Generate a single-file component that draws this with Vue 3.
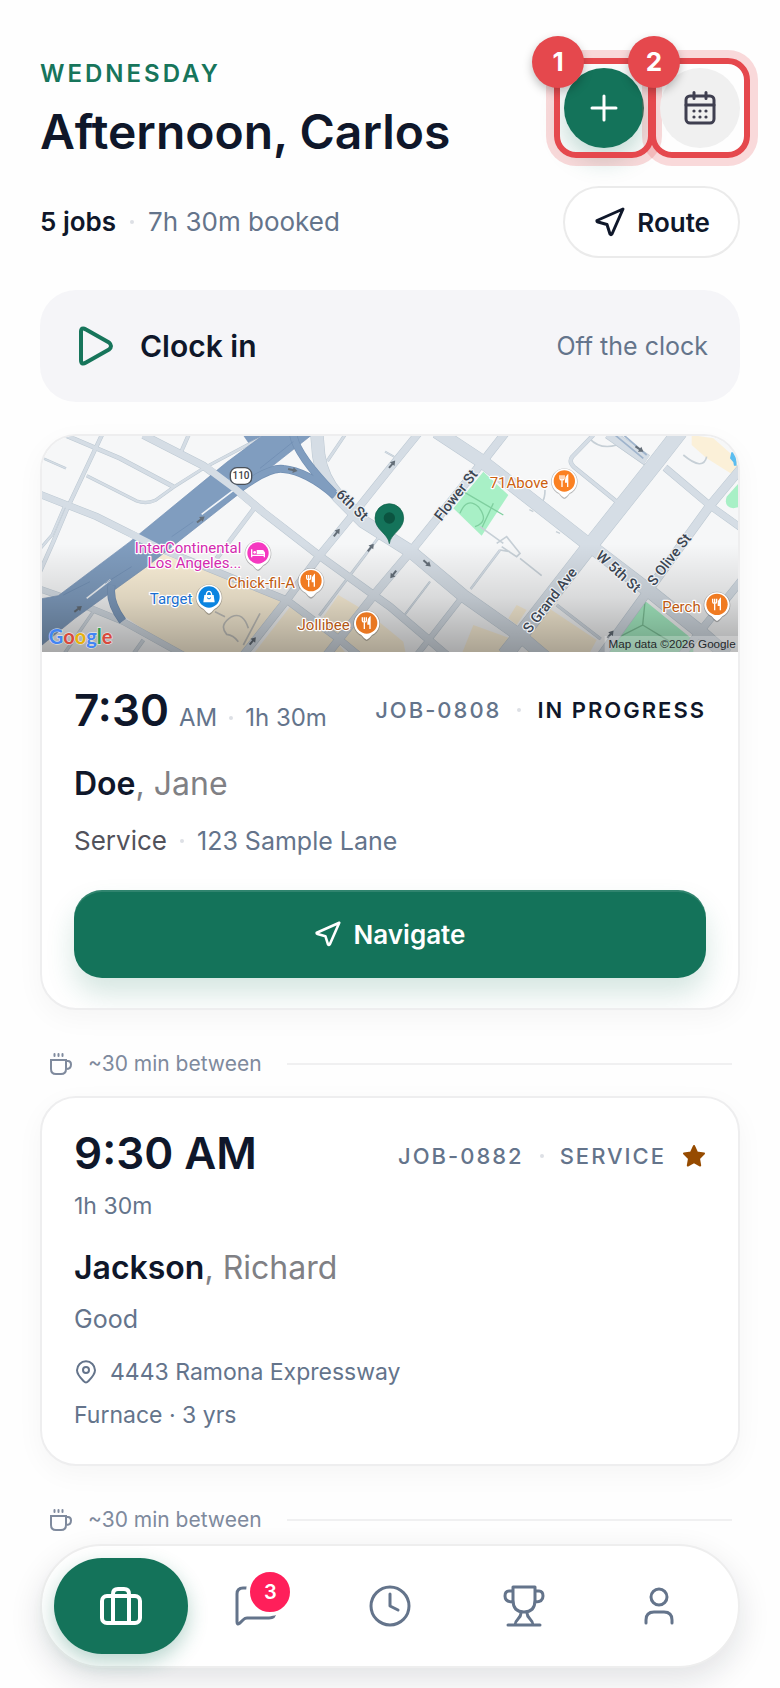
<script setup>
const roads = [
  { d: 'M340 30 L520 122 L620 195 L700 262 L865 390 L1080 545 L1250 690', w: 24 },
  { d: 'M860 20 L866 90 Q876 160 925 215 L1000 290 L1140 378 L1300 512 L1470 632 L1550 700', w: 40 },
  { d: 'M1220 20 L1360 112 L1680 362 L1860 500 L2010 620 L2090 690', w: 42 },
  { d: 'M30 208 L200 275 L400 375 L560 440 L770 525 L930 645 L985 690', w: 22 },
  { d: 'M30 492 L110 520 L280 590 L460 690', w: 20 },
  { d: 'M1425 25 L1360 108 L1150 370 L1040 500 L890 690', w: 26 },
  { d: 'M1165 25 L1080 130 L960 280 L870 390 L770 525 L640 690', w: 24 },
  { d: 'M1950 20 L1880 110 L1680 362 L1480 620 L1425 690', w: 48 },
  { d: 'M2135 128 L2040 242 L1860 490 L1715 690', w: 28 },
  { d: 'M1905 128 L2040 242 L2135 310', w: 22 },
  { d: 'M2135 465 L2010 620 L1955 690', w: 24 },
  { d: 'M1690 30 L1626 96 Q1616 112 1632 126 L1765 234', w: 13 },
  { d: 'M1735 25 L1850 105', w: 34 },
  { d: 'M680 240 L560 400', w: 14 },
  { d: 'M1580 540 L1712 642', w: 10 },
  { d: 'M1300 512 L1200 640 L1160 690', w: 18 },
  { d: 'M1410 375 L1322 492', w: 7 },
  { d: 'M1200 470 L1120 575', w: 6 },
  { d: 'M105 30 L270 100 L430 185', w: 14 },
  { d: 'M218 25 L112 250 L70 350 L30 440', w: 13 },
  { d: 'M105 240 L66 330 L30 372', w: 9 },
  { d: 'M690 40 L520 130 L430 187 L376 226 Q350 238 320 228 L170 152', w: 10 },
  { d: 'M478 25 L452 84', w: 12 },
  { d: 'M40 100 L108 130', w: 7 },
  { d: 'M948 25 L892 108', w: 10 },
  { d: 'M1065 80 L1110 105', w: 6 },
  { d: 'M1055 325 L868 572', w: 8 },
  { d: 'M190 560 L100 690', w: 10 },
  { d: 'M340 645 L308 690', w: 12 },
]

const streets = [
  { name: '6th St', x: 966, y: 240, r: 44 },
  { name: 'Flower St', x: 1278, y: 211, r: -52 },
  { name: 'S Grand Ave', x: 1560, y: 526, r: -52 },
  { name: 'W 5th St', x: 1765, y: 440, r: 42 },
  { name: 'S Olive St', x: 1918, y: 404, r: -52 },
]

const places = [
  { lines: ['InterContinental', 'Los Angeles...'], tx: 634, ty: 384, x: 684, y: 384, c: '#f538c0', t: '#d32bb0', k: 'bed' },
  { lines: ['Chick-fil-A'], tx: 795, ty: 488, x: 843, y: 467, c: '#f07b22', t: '#bd5a12', k: 'food' },
  { lines: ['Target'], tx: 487, ty: 538, x: 537, y: 516, c: '#0b84e0', t: '#1a6fd0', k: 'bag' },
  { lines: ['Jollibee'], tx: 959, ty: 615, x: 1010, y: 594, c: '#e87722', t: '#b05615', k: 'food' },
  { lines: ['71Above'], tx: 1555, ty: 189, x: 1603, y: 168, c: '#fb8122', t: '#cc5f10', k: 'food' },
  { lines: ['Perch'], tx: 2012, ty: 560, x: 2061, y: 538, c: '#f07b22', t: '#bd5a12', k: 'food' },
]

const arrows = [
  { x: 512, y: 284, r: -38 },
  { x: 144, y: 552, r: -38 },
  { x: 788, y: 135, r: 12 },
  { x: 1086, y: 118, r: -50 },
  { x: 920, y: 323, r: -52 },
  { x: 1022, y: 368, r: -52 },
  { x: 1090, y: 448, r: 128 },
  { x: 668, y: 648, r: -50 },
  { x: 1191, y: 415, r: 40 },
  { x: 1828, y: 72, r: 35 },
  { x: 1741, y: 628, r: -50 },
]
</script>

<template>
  <main class="page">
    <header class="top">
      <div class="greeting">
        <p class="day">WEDNESDAY</p>
        <h1>Afternoon, Carlos</h1>
      </div>
      <div class="actions">
        <div class="spot">
          <button class="round add" aria-label="Add job">
            <svg width="28" height="28" viewBox="0 0 28 28" fill="none" stroke="currentColor" stroke-width="3" stroke-linecap="round"><path d="M14 2v24M2 14h24" /></svg>
          </button>
          <span class="ring"></span><span class="num">1</span>
        </div>
        <div class="spot">
          <button class="round cal" aria-label="Calendar">
            <svg width="32" height="34" viewBox="0 0 32 34" fill="none" stroke="currentColor" stroke-width="3" stroke-linecap="round">
              <rect x="2" y="5" width="28" height="27" rx="4" /><path d="M2 14h28M10 1.5v6M22 1.5v6" />
              <g fill="currentColor" stroke="none"><circle cx="10" cy="20" r="1.6" /><circle cx="16" cy="20" r="1.6" /><circle cx="22" cy="20" r="1.6" /><circle cx="10" cy="26" r="1.6" /><circle cx="16" cy="26" r="1.6" /><circle cx="22" cy="26" r="1.6" /></g>
            </svg>
          </button>
          <span class="ring"></span><span class="num">2</span>
        </div>
      </div>
    </header>

    <section class="summary">
      <p class="booked"><strong>5 jobs</strong><i class="dot"></i><span>7h 30m booked</span></p>
      <button class="route">
        <svg width="30" height="30" viewBox="0 0 30 30" fill="none" stroke="currentColor" stroke-width="3" stroke-linejoin="round"><path d="M28 2 L2 13.500 Q1.500 14.500 3 15 L12 17.500 L15 27 Q16 28.500 17 27 Z" /></svg>
        Route
      </button>
    </section>

    <button class="clock">
      <svg width="36" height="40" viewBox="0 0 36 40" fill="none" stroke="currentColor" stroke-width="4" stroke-linejoin="round"><path d="M3 6 V34 Q3 39.500 8 36.500 L31 23.500 Q35 20 31 16.500 L8 3.500 Q3 .5 3 6 Z" /></svg>
      <strong>Clock in</strong>
      <span>Off the clock</span>
    </button>

    <article class="card">
      <svg class="map" viewBox="36 33 2088 648" preserveAspectRatio="xMidYMid slice" role="img" aria-label="Map">
        <defs>
          <linearGradient id="shade" x1="0" y1="0" x2="0" y2="1">
            <stop offset="0.5" stop-color="#000" stop-opacity="0" />
            <stop offset="0.75" stop-color="#000" stop-opacity="0.12" />
            <stop offset="1" stop-color="#000" stop-opacity="0.32" />
          </linearGradient>
        </defs>
        <rect x="0" y="0" width="2160" height="720" fill="#f6f7f8" />
        <g fill="#fbf0d8">
          <path d="M390 385 L250 480 L262 560 L380 640 L460 700 L620 700 L765 535 L560 446 Z" />
          <path d="M780 545 L660 700 L960 700 L920 650 Z" /><path d="M925 510 L1010 560 L1120 650 L1130 700 L1000 700 L870 590 Z" />
          <path d="M1460 540 L1490 555 L1460 600 L1435 580 Z" /><path d="M1550 545 L1700 645 L1670 700 L1490 700 L1500 610 Z" />
          <path d="M1330 600 L1440 640 L1400 700 L1290 700 Z" /><path d="M1985 30 L2050 40 L2130 110 L2110 150 L2030 100 L1985 60 Z" />
        </g>
        <g fill="#a8f0c6">
          <path d="M1360 140 L1435 210 L1355 332 L1270 250 Z" /><path d="M1842 525 L1990 645 L1990 700 L1715 700 Z" />
          <path d="M2130 170 L2090 215 Q2080 245 2110 250 L2130 245 Z" />
        </g>
        <path d="M2104 82 L2100 100 L2110 112 L2112 122 L2120 122 L2118 82 Z" fill="#5bbdf0" />
        <path d="M1300 200 L1420 270 M1290 265 Q1310 215 1345 245 Q1380 290 1335 305 M1390 235 L1355 310" fill="none" stroke="#7fcf9f" stroke-width="4" />
        <path d="M1845 530 L1838 600 L1740 650 M1838 600 L1920 650" fill="none" stroke="#7fc49a" stroke-width="4" />
        <g fill="none" stroke="#c6cfd6" stroke-width="5">
          <path d="M1350 305 L1420 355 M1400 355 L1430 335 L1470 385 L1460 395 L1415 365 M1410 375 L1440 380 M1470 400 L1535 452 M1545 195 Q1545 220 1536 232 M1678 40 Q1710 75 1760 60 L1860 130 M1960 90 Q2020 140 2030 95" />
          <path d="M555 560 L585 575 M690 565 L640 660 M655 610 Q640 560 605 575 Q565 600 590 628 Q610 630 625 650" stroke="#c3c2bd" />
        </g>
        <path d="M1510 260 l-12 -6 M1590 325 l-12 -5" stroke="#c6cfd6" stroke-width="4" />
        <path v-for="(r, i) in roads" :key="'c' + i" :d="r.d" :stroke-width="r.w" fill="none" stroke="#bcc8d2" />
        <path v-for="(r, i) in roads" :key="'f' + i" :d="r.d" :stroke-width="r.w - 3" fill="none" stroke="#d5dde5" />
        <g stroke="#7290b3" stroke-width="2" fill="#809dbf">
          <path d="M700 30 L590 112 L300 350 L85 512 L30 522 L30 665 L135 580 L350 425 L620 212 L640 192 L845 30 Z" />
          <path d="M640 30 L700 30 L655 52 Z" />
        </g>
        <g fill="none" stroke-linecap="butt">
          <path d="M630 190 Q720 125 760 132 Q830 138 915 212 M790 30 Q800 90 912 205 M245 480 Q235 530 278 588" stroke="#7290b3" stroke-width="24" />
          <path d="M630 190 Q720 125 760 132 Q830 138 915 212 M790 30 Q800 90 912 205 M245 480 Q235 530 278 588" stroke="#809dbf" stroke-width="20" />
          <path d="M515 268 L610 196 M170 520 L242 464" stroke="#f2f5f8" stroke-width="5" />
          <path d="M425 335 L490 290 M225 475 L305 425 M690 130 L790 50 M100 510 L180 470" stroke="#6c8bb0" stroke-width="2" />
          <path d="M530 128 L620 195 L700 262 M300 325 L400 376" stroke="#d5dde5" stroke-width="21" />
        </g>
        <path d="M1755 30 L1840 100 M1775 25 L1850 90" stroke="#9fb4cc" stroke-width="5" />
        <g v-for="(a, i) in arrows" :key="'a' + i" :transform="`translate(${a.x} ${a.y}) rotate(${a.r})`">
          <path d="M-14 0 H4" stroke="#646e78" stroke-width="6" /><path d="M1 -9 L15 0 L1 9 Z" fill="#646e78" />
        </g>
        <rect x="36" y="33" width="2088" height="648" fill="url(#shade)" />
        <rect x="601" y="128" width="64" height="50" rx="20" fill="#fff" stroke="#4a5058" stroke-width="4" />
        <text x="633" y="163" class="shield">110</text>
        <text v-for="s in streets" :key="s.name" class="street" dy="14" :transform="`translate(${s.x} ${s.y}) rotate(${s.r})`">{{ s.name }}</text>
        <g v-for="p in places" :key="p.tx">
          <text v-for="(l, i) in p.lines" :key="l" class="place" :x="p.tx" :y="p.ty + i * 46" :fill="p.t">{{ l }}</text>
          <g :transform="`translate(${p.x} ${p.y})`">
            <path d="M0 54 Q-7 52 -16 39 A40 40 0 1 1 16 39 Q7 52 0 54 Z" fill="#000" opacity=".25" />
            <path d="M0 50 Q-7 48 -16 36 A38 38 0 1 1 16 36 Q7 48 0 50 Z" fill="#fff" />
            <circle r="32" :fill="p.c" />
            <g v-if="p.k === 'food'" fill="none" stroke="#fff">
              <path d="M-13 -17 V-7 Q-13 -3 -7 -3 Q-1 -3 -1 -7 V-17 M-7 -17 V18" stroke-width="4" />
              <path d="M10 18 V-17 Q4 -12 4 -2 V3 H10 Z" fill="#fff" stroke-width="4" />
            </g>
            <g v-else-if="p.k === 'bed'" fill="none" stroke="#fff" stroke-width="4">
              <path d="M-19 -11 V13 M-19 7 H19 M19 13 V-2" /><circle cx="-10" cy="-2" r="4" fill="#fff" stroke="none" /><path d="M-2 2 V-7 H13 Q18 -7 18 2 Z" fill="#fff" />
            </g>
            <g v-else>
              <path d="M-14 -6 H14 L17 16 H-17 Z" fill="#fff" /><path d="M-8 -4 Q-8 -17 0 -17 Q8 -17 8 -4" fill="none" stroke="#fff" stroke-width="4" /><path d="M-6 2 Q0 10 6 2" fill="none" stroke="#0b84e0" stroke-width="3" />
            </g>
          </g>
        </g>
        <path d="M1078 356 C1074 325 1035 315 1035 279 A43 43 0 0 1 1121 279 C1121 315 1082 325 1078 356 Z" fill="#14735a" stroke="#0d6049" stroke-width="2" />
        <circle cx="1078" cy="279" r="17" fill="#0b5340" />
        <text x="56" y="658" class="brand"><tspan fill="#4285f4">G</tspan><tspan fill="#d9493c">o</tspan><tspan fill="#e8b10c">o</tspan><tspan fill="#4285f4">g</tspan><tspan fill="#2f9e50">l</tspan><tspan fill="#d9493c">e</tspan></text>
        <rect x="1724" y="633" width="400" height="48" fill="#fff" opacity=".25" />
        <text x="2117" y="669" class="credit">Map data ©2026 Google</text>
      </svg>
      <div class="body">
        <div class="line">
          <p class="time"><b>7:30</b><span>AM</span><i class="dot"></i><span>1h 30m</span></p>
          <p class="tag"><span>JOB-0808</span><i class="dot"></i><span class="dark">IN PROGRESS</span></p>
        </div>
        <h2>Doe<span>, Jane</span></h2>
        <p class="where"><b>Service</b><i class="dot"></i><span>123 Sample Lane</span></p>
        <button class="navigate">
          <svg width="26" height="26" viewBox="0 0 30 30" fill="none" stroke="currentColor" stroke-width="3" stroke-linejoin="round"><path d="M28 2 L2 13.500 Q1.500 14.500 3 15 L12 17.500 L15 27 Q16 28.500 17 27 Z" /></svg>
          Navigate
        </button>
      </div>
    </article>

    <div class="between">
      <svg width="22" height="22" viewBox="0 0 22 22" fill="none" stroke="currentColor" stroke-width="2" stroke-linecap="round"><path d="M1 7 H16 V16 Q16 21 11 21 H6 Q1 21 1 16 Z M16 8 H18 Q21 8 21 11.500 Q21 16 16 16 M4.500 1 V3 M8.500 1 V3 M12.500 1 V3" /></svg>
      <span>~30 min between</span>
      <hr />
    </div>

    <article class="card">
      <div class="body second">
        <div class="line">
          <p class="time"><b>9:30 AM</b></p>
          <p class="tag">
            <span>JOB-0882</span><i class="dot"></i><span>SERVICE</span>
            <svg class="star" width="24" height="24" viewBox="0 0 24 24" fill="#964b00" stroke="#964b00" stroke-width="2" stroke-linejoin="round"><path d="M12 2 L15 8.500 L22 9.500 L17 14.500 L18.200 21.500 L12 18.200 L5.800 21.500 L7 14.500 L2 9.500 L9 8.500 Z" /></svg>
          </p>
        </div>
        <p class="duration">1h 30m</p>
        <h2>Jackson<span>, Richard</span></h2>
        <p class="note">Good</p>
        <p class="address">
          <svg width="24" height="24" viewBox="0 0 24 24" fill="none" stroke="currentColor" stroke-width="2"><path d="M12 22.500 Q11 22.500 9.500 21 Q3 14.500 3 10.300 A9 9 0 0 1 21 10.300 Q21 14.500 14.500 21 Q13 22.500 12 22.500 Z" /><circle cx="12" cy="10" r="3" /></svg>
          <span>4443 Ramona Expressway</span>
        </p>
        <p class="asset">Furnace · 3 yrs</p>
      </div>
    </article>

    <div class="between last">
      <svg width="22" height="22" viewBox="0 0 22 22" fill="none" stroke="currentColor" stroke-width="2" stroke-linecap="round"><path d="M1 7 H16 V16 Q16 21 11 21 H6 Q1 21 1 16 Z M16 8 H18 Q21 8 21 11.500 Q21 16 16 16 M4.500 1 V3 M8.500 1 V3 M12.500 1 V3" /></svg>
      <span>~30 min between</span>
      <hr />
    </div>

    <nav class="tabs">
      <button class="tab active" aria-label="Jobs">
        <svg width="42" height="38" viewBox="0 0 42 38" fill="none" stroke="currentColor" stroke-width="4" stroke-linejoin="round"><rect x="2" y="9" width="38" height="27" rx="5" /><path d="M13 35 V7 Q13 2 18 2 H24 Q29 2 29 7 V35" /></svg>
      </button>
      <button class="tab" aria-label="Messages">
        <svg width="42" height="40" viewBox="0 0 42 40" fill="none" stroke="currentColor" stroke-width="3" stroke-linecap="round" stroke-linejoin="round"><path d="M8 2 H34 Q40 2 40 8 V26 Q40 32 34 32 H12 Q10 32 8.500 33.500 L4.500 37.300 Q2 39 2 36 V8 Q2 2 8 2 Z" /></svg>
        <span class="badge">3</span>
      </button>
      <button class="tab" aria-label="Time">
        <svg width="42" height="42" viewBox="0 0 42 42" fill="none" stroke="currentColor" stroke-width="3" stroke-linecap="round" stroke-linejoin="round"><circle cx="21" cy="21" r="19" /><path d="M21 9 V21 L29 25" /></svg>
      </button>
      <button class="tab" aria-label="Awards">
        <svg width="42" height="42" viewBox="0 0 42 42" fill="none" stroke="currentColor" stroke-width="3" stroke-linecap="round" stroke-linejoin="round"><path d="M10 2 H32 V15 Q32 27 21 27 Q10 27 10 15 Z M10 6 H6 Q2 6 2 11 Q2 17 10 17 M32 6 H36 Q40 6 40 11 Q40 17 32 17 M5 40 H37 M18 28 Q18 31 15 34 Q12 37 12 40 M24 28 Q24 31 27 34 Q30 37 30 40" /></svg>
      </button>
      <button class="tab" aria-label="Profile">
        <svg width="34" height="40" viewBox="0 0 34 40" fill="none" stroke="currentColor" stroke-width="3" stroke-linecap="round"><circle cx="17" cy="11" r="8" /><path d="M4 37 V34 Q4 26 12 26 H22 Q30 26 30 34 V37" /></svg>
      </button>
    </nav>
  </main>
</template>

<style>
body { background: #fefefe; }
</style>

<style scoped>
* { box-sizing: border-box; }
.page {
  min-height: 100vh;
  padding: 60px 40px 20px;
  font-family: Inter, "Liberation Sans", sans-serif;
  font-size: 24px;
  color: #0f172a;
}
p, h1, h2 { margin: 0; }
button { border: 0; padding: 0; font: inherit; color: inherit; cursor: pointer; }
svg { display: block; flex: none; }
.top { display: flex; justify-content: space-between; align-items: flex-start; }
.day { color: #17755b; font-size: 24px; font-weight: 600; line-height: 28px; letter-spacing: 3px; }
h1 { margin-top: 16px; font-size: 48px; font-weight: 600; line-height: 56px; white-space: nowrap; }
.actions { display: flex; gap: 16px; margin-top: 8px; }
.spot { position: relative; }
.round { display: flex; align-items: center; justify-content: center; width: 80px; height: 80px; border-radius: 50%; }
.add { background: #14735a; color: #fff; box-shadow: 0 12px 24px rgba(20, 115, 90, .25); }
.cal { background: #f0f0f0; color: #3f3f50; }
.ring { position: absolute; inset: -10px; border: 6px solid #e5484d; border-radius: 22px; box-shadow: 0 0 0 8px rgba(229, 72, 77, .2); pointer-events: none; }
.num { position: absolute; z-index: 2; left: -32px; top: -32px; width: 52px; height: 52px; border-radius: 50%; background: #e5484d; color: #fff; font-size: 26px; font-weight: 700; line-height: 52px; text-align: center; box-shadow: 0 4px 10px rgba(0, 0, 0, .25); }
.summary { display: flex; justify-content: space-between; align-items: center; margin-top: 26px; }
.booked, .where { display: flex; align-items: center; color: #64748b; font-size: 26px; line-height: 32px; }
.booked strong { font-weight: 600; color: #0f172a; }
.dot { width: 4px; height: 4px; margin: 0 13px; border-radius: 50%; background: #dde0e5; }
.booked .dot { margin: 0 14px; }
.route { display: flex; align-items: center; gap: 12px; height: 72px; padding: 0 28px 0 30px; border: 2px solid #ebebeb; border-radius: 36px; background: #fff; font-size: 26px; font-weight: 600; }
.clock { display: flex; align-items: center; width: 100%; height: 112px; margin-top: 32px; padding: 0 32px 0 38px; border-radius: 36px; background: #f5f5f8; text-align: left; }
.clock svg { color: #17755b; }
.clock strong { flex: 1; margin-left: 26px; font-size: 30px; font-weight: 600; }
.clock span { font-size: 25px; color: #64748b; }
.card { margin-top: 32px; overflow: hidden; border: 2px solid #eeeeef; border-radius: 36px; background: #fff; box-shadow: 0 8px 28px rgba(0, 0, 0, .04); }
.map { width: 100%; height: 216px; font-family: Roboto, sans-serif; }
.shield { font-size: 30px; font-weight: 500; text-anchor: middle; fill: #3c4148; }
.street { font-size: 43px; font-weight: 500; text-anchor: middle; fill: #3b4552; stroke: #eef1f4; stroke-width: 7; paint-order: stroke; stroke-linejoin: round; }
.place { font-size: 45px; text-anchor: end; stroke: #fff; stroke-width: 7; paint-order: stroke; stroke-linejoin: round; }
.brand { font-family: Lato, sans-serif; font-size: 60px; font-weight: 700; stroke: #fff; stroke-opacity: .6; stroke-width: 4; paint-order: stroke; }
.credit { font-family: "Liberation Sans", sans-serif; font-size: 35px; text-anchor: end; fill: #25282b; }
.body { padding: 32px 32px 30px; }
.second { padding: 30px 32px 35px; }
.line { display: flex; justify-content: space-between; align-items: center; height: 52px; white-space: nowrap; }
.time { display: flex; align-items: baseline; color: #64748b; font-size: 24px; line-height: 32px; }
.time b { font-size: 44px; font-weight: 600; line-height: 52px; color: #0f172a; }
.time b + span { margin-left: 10px; }
.time .dot { align-self: center; position: relative; top: 8px; margin: 0 12px; }
.second .line { height: 50px; }
.tag { display: flex; align-items: center; font-size: 22px; font-weight: 500; letter-spacing: 2px; color: #64748b; }
.second .tag { margin-top: 6px; }
.tag .dot { margin: 0 16px; }
.tag .dark { color: #0f172a; font-weight: 600; }
.star { margin-left: 16px; }
h2 { margin-top: 28px; font-size: 32px; font-weight: 600; line-height: 40px; }
h2 span { font-weight: 400; color: #808084; }
.where { margin-top: 21px; }
.where b { font-weight: 400; color: #52525b; }
.where span { font-size: 25px; }
.navigate { display: flex; align-items: center; justify-content: center; gap: 13px; width: 100%; height: 88px; margin-top: 33px; border-radius: 28px; background: #14735a; color: #fff; font-size: 26px; font-weight: 600; box-shadow: inset 0 2px 0 rgba(255, 255, 255, .12), 0 16px 28px rgba(20, 115, 90, .18); }
.between { display: flex; align-items: center; margin: 38px 8px 16px 10px; font-size: 21px; line-height: 32px; color: #7f8a9d; }
.between span { margin: 0 25px 0 16px; }
.between hr { flex: 1; height: 2px; margin: 0; border: 0; background: #f0f0f1; }
.between + .card { margin-top: 0; }
.last { margin-bottom: 8px; }
.duration { margin-top: 14px; font-size: 23px; line-height: 28px; color: #64748b; }
.note { margin-top: 15px; font-size: 25px; line-height: 32px; color: #64748b; }
.address { display: flex; align-items: center; gap: 12px; margin-top: 21px; line-height: 32px; color: #64748b; font-size: 23px; }
.asset { margin-top: 13px; font-size: 23px; line-height: 28px; color: #64748b; }
.tabs { position: sticky; bottom: 20px; display: flex; height: 124px; padding: 12px; border: 2px solid #eeeeee; border-radius: 62px; background: #fff; box-shadow: 0 12px 32px rgba(15, 23, 42, .12); }
.tab { position: relative; display: flex; flex: 1; align-items: center; justify-content: center; border-radius: 48px; background: none; color: #64748b; }
.active { background: #14735a; color: #fff; box-shadow: 0 8px 20px rgba(20, 115, 90, .3); }
.badge { position: absolute; top: 10px; left: 58px; width: 48px; height: 48px; border: 4px solid #fff; border-radius: 50%; background: #ff1f5a; color: #fff; font-size: 20px; font-weight: 600; line-height: 40px; text-align: center; }
</style>
